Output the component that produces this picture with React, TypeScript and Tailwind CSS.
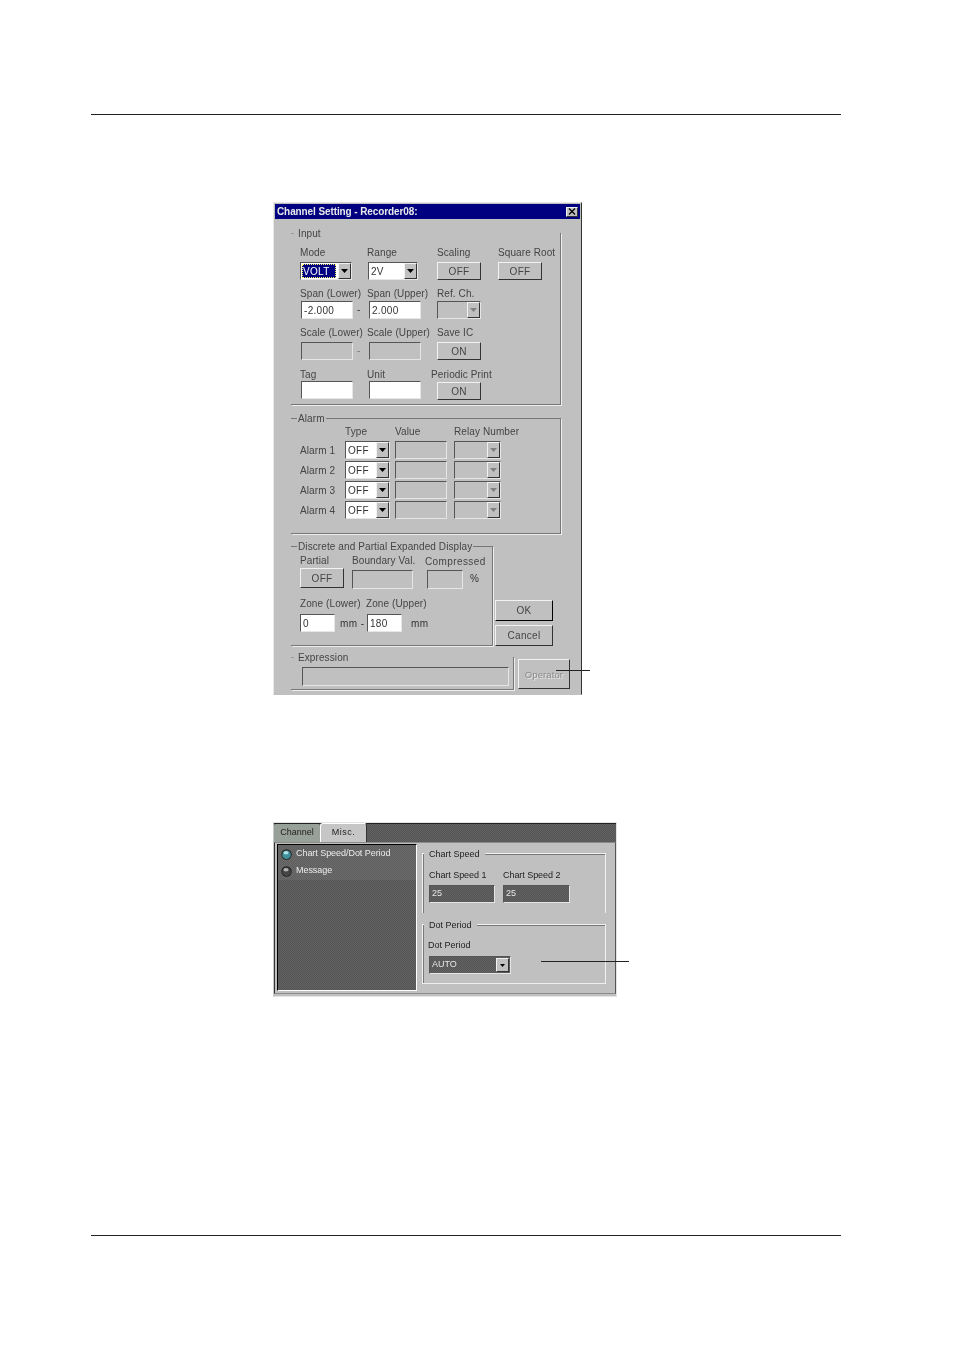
import React from "react";

const raised = "border border-t-[#f2f2f2] border-l-[#f2f2f2] border-r-[#333] border-b-[#333]";
const sunken = "border border-t-[#555] border-l-[#555] border-r-[#e6e6e6] border-b-[#e6e6e6]";
const dither = "bg-[repeating-conic-gradient(#535353_0_25%,#646464_0_50%)] bg-[length:2px_2px]";
const ditherLight = "bg-[repeating-conic-gradient(#5e5e5e_0_25%,#6c6c6c_0_50%)] bg-[length:2px_2px]";

function L({ w, children, cls = "" }: { w?: number; children?: React.ReactNode; cls?: string }) {
  return (
    <div className={"h-[11px] leading-[11px] whitespace-nowrap text-[10px] tracking-[0.1px] text-[#444] " + cls} style={w ? { width: w } : undefined}>
      {children}
    </div>
  );
}

function Btn({ w, h, children, cls = "" }: { w: number; h: number; children?: React.ReactNode; cls?: string }) {
  return (
    <div className={"flex items-center justify-center shrink-0 bg-[#c0c0c0] text-[10px] tracking-[0.3px] text-[#444] " + raised + " " + cls} style={{ width: w, height: h }}>
      {children}
    </div>
  );
}

function Field({ w, h = 18, white, children }: { w: number; h?: number; white?: boolean; children?: React.ReactNode }) {
  return (
    <div className={"flex items-center shrink-0 pl-[2px] text-[10px] tracking-[0.3px] text-[#333] " + sunken + (white ? " bg-white" : " bg-[#c0c0c0]")} style={{ width: w, height: h }}>
      {children}
    </div>
  );
}

function Arrow({ color = "#000" }: { color?: string }) {
  return (
    <svg width="7" height="4" viewBox="0 0 7 4" className="block">
      <path d="M0 0h7L3.500 4z" fill={color} />
    </svg>
  );
}

function Combo({ w, white, children, focus }: { w: number; white?: boolean; children?: React.ReactNode; focus?: boolean }) {
  return (
    <div className={"flex items-center shrink-0 h-[18px] text-[10px] tracking-[0.3px] text-[#333] " + sunken + (white ? " bg-white" : " bg-[#c0c0c0]")} style={{ width: w }}>
      <div className="flex-1 min-w-0 pl-[1px] flex items-center">
        {focus ? (
          <span className="flex items-center w-[34px] h-[14px] bg-[#000080] text-white border border-dotted border-[#ffff66]">{children}</span>
        ) : (
          <span className="pl-[1px]">{children}</span>
        )}
      </div>
      <div className={"flex items-center justify-center w-[13px] h-[16px] bg-[#c0c0c0] " + raised}>
        <Arrow color={white ? "#000" : "#808080"} />
      </div>
    </div>
  );
}

function Legend({ children }: { children: React.ReactNode }) {
  return (
    <div className="absolute top-[-6px] left-[6px] bg-[#c0c0c0] pl-[1px] pr-[1px] h-[12px] leading-[12px] whitespace-nowrap text-[10px] tracking-[0.1px] text-[#444]">
      {children}
    </div>
  );
}

function OpenLegend({ children }: { children: React.ReactNode }) {
  return (
    <>
      <div className="absolute top-0 left-0 w-[3px] h-px bg-[#999]" />
      <div className="absolute top-[-5px] left-0 pl-[7px] text-[10px] leading-[12px] tracking-[0.1px] text-[#444] whitespace-nowrap">{children}</div>
    </>
  );
}

function AlarmRow({ n }: { n: number }) {
  return (
    <div className="flex items-center h-[18px] mb-[2px]">
      <L w={45}>Alarm {n}</L>
      <Combo w={45} white>OFF</Combo>
      <div className="w-[5px]" />
      <Field w={52} />
      <div className="w-[7px]" />
      <Combo w={47} />
    </div>
  );
}

function Dialog() {
  return (
    <div className="w-[309px] h-[493px] ml-[273px] bg-[#c0c0c0] border border-t-[#e8e8e8] border-l-[#e8e8e8] border-r-[#333] border-b-[#c0c0c0] pt-[1px] overflow-hidden">
      <div className="flex items-center justify-between h-[15px] mx-[1px] bg-[#000080] pl-[2px] pr-[2px]">
        <span className="text-[10px] font-bold tracking-[-0.1px] text-[#e8e8e8] whitespace-nowrap">Channel Setting - Recorder08:</span>
        <div className={"flex items-center justify-center w-[12px] h-[10px] bg-[#c0c0c0] " + raised}>
          <svg width="8" height="7" viewBox="0 0 8 7" className="block">
            <path d="M1 0.500l6 6M7 0.500l-6 6" stroke="#000" strokeWidth="1.300" fill="none" />
          </svg>
        </div>
      </div>

      <div className="pl-[17px] w-[307px]">
        {/* Input */}
        <div className="relative mt-[14px] w-[270px] h-[172px] border-r border-b border-r-[#777] border-b-[#777] shadow-[1px_1px_0_#eee] pl-[9px]">
          <OpenLegend>Input</OpenLegend>
          <div className="h-[14px]" />
          <div className="flex h-[11px]">
            <L w={67}>Mode</L><L w={70}>Range</L><L w={61}>Scaling</L><L>Square Root</L>
          </div>
          <div className="flex mt-[4px] h-[18px]">
            <div className="w-[67px]"><Combo w={52} white focus>VOLT</Combo></div>
            <div className="w-[70px] pl-[1px]"><Combo w={50} white>2V</Combo></div>
            <div className="w-[61px]"><Btn w={44} h={18}>OFF</Btn></div>
            <Btn w={44} h={18}>OFF</Btn>
          </div>
          <div className="flex h-[11px] mt-[8px]">
            <L w={67}>Span (Lower)</L><L w={70}>Span (Upper)</L><L>Ref. Ch.</L>
          </div>
          <div className="flex mt-[2px] h-[19px]">
            <div className="w-[56px] pl-[1px]"><Field w={52} h={18} white>-2.000</Field></div>
            <div className="w-[12px] text-[10px] leading-[18px] text-[#333] pl-[1px]">-</div>
            <div className="w-[69px] pl-[1px]"><Field w={52} h={18} white>2.000</Field></div>
            <Combo w={44} />
          </div>
          <div className="flex h-[11px] mt-[7px]">
            <L w={67}>Scale (Lower)</L><L w={70}>Scale (Upper)</L><L>Save IC</L>
          </div>
          <div className="flex mt-[4px] h-[19px]">
            <div className="w-[56px] pl-[1px]"><Field w={52} h={18} /></div>
            <div className="w-[12px] text-[10px] leading-[18px] text-[#777] pl-[1px]">-</div>
            <div className="w-[69px] pl-[1px]"><Field w={52} h={18} /></div>
            <Btn w={44} h={18}>ON</Btn>
          </div>
          <div className="flex h-[11px] mt-[8px]">
            <L w={67}>Tag</L><L w={64}>Unit</L><L>Periodic Print</L>
          </div>
          <div className="flex mt-[1px] h-[19px]">
            <div className="w-[68px] pl-[1px]"><Field w={52} h={18} white /></div>
            <div className="w-[69px] pl-[1px]"><Field w={52} h={18} white /></div>
            <div className="mt-[1px]"><Btn w={44} h={18}>ON</Btn></div>
          </div>
        </div>

        {/* Alarm */}
        <div className="relative mt-[13px] w-[270px] h-[116px] border-t border-r border-b border-[#777] shadow-[1px_1px_0_#eee] pl-[9px]">
          <Legend>Alarm</Legend>
          <div className="flex h-[11px] mt-[7px] ml-[45px]">
            <L w={50}>Type</L><L w={59}>Value</L><L>Relay Number</L>
          </div>
          <div className="mt-[4px]">
            <AlarmRow n={1} />
            <AlarmRow n={2} />
            <AlarmRow n={3} />
            <AlarmRow n={4} />
          </div>
        </div>

        {/* Discrete + buttons */}
        <div className="flex mt-[12px]">
          <div className="relative w-[202px] h-[100px] border-t border-r border-b border-[#777] shadow-[1px_1px_0_#eee] pl-[9px]">
            <Legend>Discrete and Partial Expanded Display</Legend>
            <div className="flex h-[11px] mt-[8px]">
              <L w={52}>Partial</L><L w={73}>Boundary Val.</L><L cls="mt-[1px] tracking-[0.4px]">Compressed</L>
            </div>
            <div className="flex mt-[2px]">
              <Btn w={44} h={20}>OFF</Btn>
              <div className="w-[8px]" />
              <div className="mt-[2px]"><Field w={61} h={19} /></div>
              <div className="w-[14px]" />
              <div className="mt-[2px]"><Field w={36} h={19} /></div>
              <div className="w-[7px] shrink-0" />
              <div className="mt-[4px] text-[10px] leading-[14px] text-[#333]">%</div>
            </div>
            <div className="flex h-[11px] mt-[9px]">
              <L w={66}>Zone (Lower)</L><L>Zone (Upper)</L>
            </div>
            <div className="flex items-center mt-[5px] h-[18px]">
              <Field w={35} white>0</Field>
              <div className="w-[32px] pl-[5px] text-[10px] tracking-[0.4px] text-[#333] whitespace-nowrap">mm -</div>
              <Field w={35} white>180</Field>
              <div className="pl-[9px] text-[10px] tracking-[0.4px] text-[#333]">mm</div>
            </div>
          </div>
          <div className="flex flex-col justify-end ml-[2px]">
            <Btn w={58} h={21} cls="border-r-black border-b-black">OK</Btn>
            <div className="h-[4px]" />
            <Btn w={58} h={21}>Cancel</Btn>
          </div>
        </div>

        {/* Expression */}
        <div className="flex mt-[11px]">
          <div className="relative w-[223px] h-[33px] border-r border-b border-[#777] shadow-[1px_1px_0_#eee] pl-[11px] pt-[10px]">
            <OpenLegend>Expression</OpenLegend>
            <Field w={207} h={19} />
          </div>
          <div className="ml-[4px] mt-[2px]">
            <Btn w={52} h={30}><span className="relative top-[1px] text-[#8a8a8a] text-[9.500px] tracking-[0.1px] [text-shadow:1px_1px_0_#e8e8e8]">Operator</span></Btn>
          </div>
        </div>
      </div>
    </div>
  );
}

function Dark({ w, children }: { w: number; children?: React.ReactNode }) {
  return (
    <div className={"flex items-center h-[18px] pl-[2px] text-[9px] text-[#e6e6e6] shrink-0 " + dither + " " + sunken} style={{ width: w }}>
      {children}
    </div>
  );
}

function Dot({ color, shine }: { color: string; shine: string }) {
  return (
    <svg width="11" height="11" viewBox="0 0 11 11" className="block shrink-0">
      <circle cx="5.500" cy="5.500" r="5.200" fill="#222" />
      <circle cx="5.500" cy="5.800" r="4.300" fill={color} />
      <ellipse cx="5" cy="3.800" rx="2.600" ry="1.800" fill={shine} />
    </svg>
  );
}

function Misc() {
  return (
    <div className="w-[344px] h-[175px] ml-[273px] border border-[#e4e4e4] border-l-[#c8c8c8] bg-[#c0c0c0]">
      <div className={"flex items-end h-[19px] border-t border-t-[#222] " + dither}>
        <div className="flex items-center justify-center w-[46px] h-[18px] bg-[#98a09a] text-[9px] text-[#222] rounded-t-[2px]">Channel</div>
        <div className="flex items-center justify-center w-[47px] h-[19px] bg-[#c6c6c6] border-t border-l border-r border-t-white border-l-white border-r-[#333] text-[9px] tracking-[0.5px] text-[#222] rounded-t-[3px]">Misc.</div>
      </div>
      <div className="flex h-[152px] border border-[#8a8a8a] border-l-[#333] border-r-[#555] p-[1px]">
        <div className={"w-[140px] h-[147px] ml-[1px] border border-t-black border-l-black border-r-white border-b-white " + dither}>
          <div className={"flex flex-col pb-[3px] pt-[3px] gap-[5px] pl-[3px] " + ditherLight}>
            <div className="flex items-center gap-[4px] h-[12px] text-[9px] tracking-[-0.05px] text-[#ececec] whitespace-nowrap">
              <Dot color="#3f8f98" shine="#a9e0e4" />Chart Speed/Dot Period
            </div>
            <div className="flex items-center gap-[4px] h-[12px] text-[9px] tracking-[-0.05px] text-[#ececec] whitespace-nowrap">
              <Dot color="#454545" shine="#b0b0b0" />Message
            </div>
          </div>
        </div>
        <div className="ml-[5px] w-[185px] pt-[9px]">
          <div className="relative w-[184px] h-[60px] border-t border-l border-r border-[#f0f0f0] shadow-[inset_1px_1px_0_#777]">
            <div className="absolute top-[-6px] left-[1px] bg-[#c0c0c0] px-[5px] h-[12px] leading-[12px] text-[9px] text-[#222] whitespace-nowrap">Chart Speed</div>
            <div className="flex pl-[6px] mt-[16px] h-[11px] text-[9px] tracking-[-0.05px] leading-[11px] text-[#222]">
              <div className="w-[74px]">Chart Speed 1</div><div>Chart Speed 2</div>
            </div>
            <div className="flex pl-[6px] mt-[4px]">
              <Dark w={66}>25</Dark>
              <div className="w-[8px]" />
              <Dark w={67}>25</Dark>
            </div>
          </div>
          <div className="relative mt-[11px] w-[184px] h-[60px] border border-[#f0f0f0] shadow-[inset_1px_1px_0_#777]">
            <div className="absolute top-[-6px] left-[1px] bg-[#c0c0c0] px-[5px] h-[12px] leading-[12px] text-[9px] text-[#222] whitespace-nowrap">Dot Period</div>
            <div className="pl-[5px] mt-[15px] h-[11px] text-[9px] leading-[11px] text-[#222]">Dot Period</div>
            <div className="flex items-center pl-[6px] mt-[5px]">
              <div className={"flex items-center w-[82px] h-[18px] pl-[2px] text-[9px] text-[#e6e6e6] " + dither + " " + sunken}>
                <span className="flex-1">AUTO</span>
                <div className={"flex items-center justify-center w-[13px] h-[14px] mr-[1px] bg-[#c0c0c0] " + raised}>
                  <svg width="5" height="3" viewBox="0 0 5 3" className="block"><path d="M0 0h5L2.500 3z" fill="#000" /></svg>
                </div>
              </div>
            </div>
          </div>
        </div>
      </div>
    </div>
  );
}

export default function App() {
  return (
    <div className="relative w-[954px] h-[1350px] bg-white overflow-hidden font-['Liberation_Sans',Arial,sans-serif]">
      <div className="h-[114px]" />
      <div className="ml-[91px] w-[750px] h-px bg-[#222]" />
      <div className="h-[87px]" />
      <div className="blur-[0.25px]"><Dialog /></div>
      <div className="h-[127px]" />
      <div className="blur-[0.25px]"><Misc /></div>
      <div className="h-[238px]" />
      <div className="ml-[91px] w-[750px] h-px bg-[#222]" />
      {/* leader lines lying over the screenshots */}
      <div className="absolute left-[556px] top-[670px] w-[34px] h-px bg-[#222]" />
      <div className="absolute left-[541px] top-[961px] w-[88px] h-px bg-[#222]" />
    </div>
  );
}
